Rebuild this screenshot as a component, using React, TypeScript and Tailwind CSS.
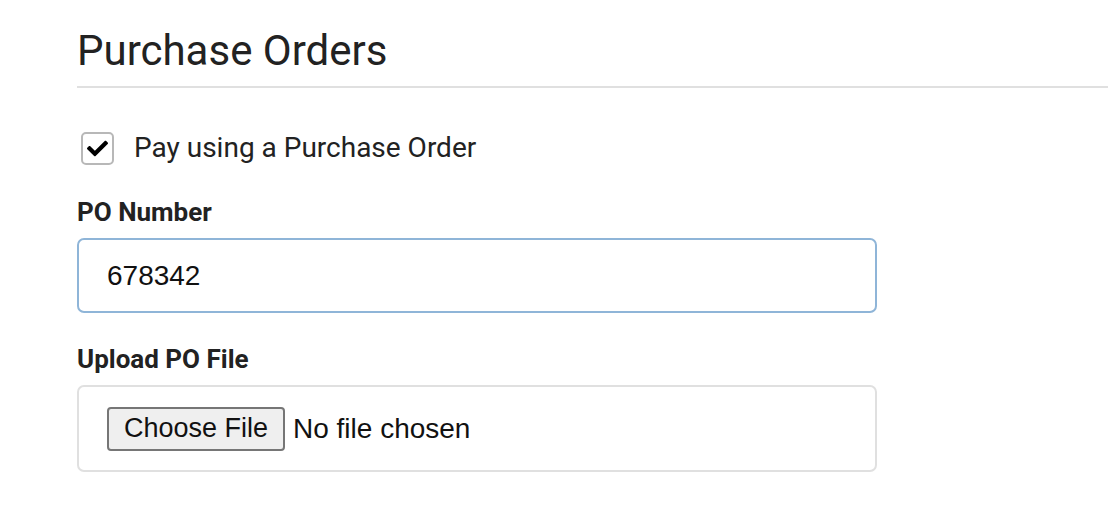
import { useState } from "react";
import { FaCheck } from "react-icons/fa";

const App = () => {
  const [usePo, setUsePo] = useState(true);
  const [poNumber, setPoNumber] = useState("678342");

  return (
    <div className="w-[1108px] h-[516px] bg-white overflow-hidden font-['Roboto',sans-serif] text-[#222]">
      <div className="pl-[77px] pt-[26px]">
        {/* Heading */}
        <h1 className="text-[42px] leading-[50px] font-normal">Purchase Orders</h1>
        <div className="mt-[10px] h-[2px] bg-[#e0e0e0]" />

        {/* Toggle */}
        <label className="mt-[43px] flex items-center gap-[20px] cursor-pointer">
          <input
            type="checkbox"
            checked={usePo}
            onChange={() => setUsePo(!usePo)}
            className="sr-only"
          />
          <span className="ml-[4px] w-[33px] h-[33px] rounded-[5px] border-2 border-[#b8b8b8] bg-white flex items-center justify-center">
            {usePo && <FaCheck className="w-[21px] h-[21px] text-black" />}
          </span>
          <span className="text-[28px] leading-[34px]">Pay using a Purchase Order</span>
        </label>

        {/* PO number */}
        <div className="mt-[32px] w-[800px]">
          <label className="block text-[26px] leading-[30px] font-bold">PO Number</label>
          <input
            value={poNumber}
            onChange={(e) => setPoNumber(e.target.value)}
            className="mt-[11px] block w-full h-[75px] rounded-[7px] border-2 border-[#8fb5d8] px-[28px] text-[28px] font-['Liberation_Sans',Arial,sans-serif] text-[#111] outline-none"
          />
        </div>

        {/* Upload */}
        <div className="mt-[31px] w-[800px]">
          <label className="block text-[26px] leading-[30px] font-bold">Upload PO File</label>
          <div className="mt-[11px] h-[87px] rounded-[7px] border-2 border-[#e0e0e0] px-[28px] flex items-center gap-[8px] font-['Liberation_Sans',Arial,sans-serif] text-[28px] text-[#111]">
            <button className="h-[44px] w-[178px] rounded-[4px] border-2 border-[#767676] bg-[#efefef] text-[27px] leading-none">
              Choose File
            </button>
            <span>No file chosen</span>
          </div>
        </div>
      </div>
    </div>
  );
};

export default App;
